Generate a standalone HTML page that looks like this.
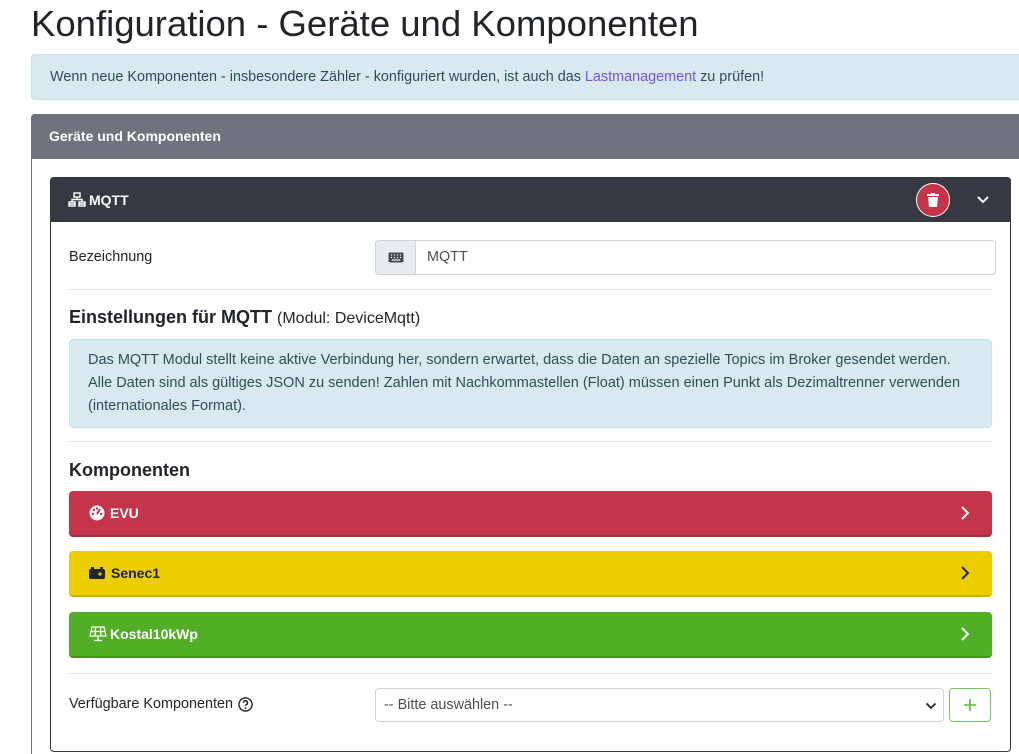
<!DOCTYPE html>
<html><head><meta charset="utf-8"><style>
*{box-sizing:border-box;margin:0;padding:0}
html,body{width:1019px;height:754px;overflow:hidden}
body{background:#fff;font-family:"Liberation Sans",sans-serif;color:#212529;font-size:14px;position:relative}
.abs{position:absolute}
h1{position:absolute;left:31px;top:3px;font-size:36.5px;font-weight:400;color:#212529;white-space:nowrap}
.info{background:#d9e9f0;border:1px solid #c6e1ea;border-radius:4px;color:#2c4f5c}
.bar{border-radius:4px;height:46px;font-weight:bold;font-size:14px;display:flex;align-items:center;padding-left:20px}
.bar .ch{position:absolute;right:22px;top:15px}
</style></head><body>
<h1>Konfiguration - Geräte und Komponenten</h1>
<div class="abs info" style="left:31px;top:54px;width:1000px;height:46px;padding:14px 18px;font-size:14.4px;white-space:nowrap">Wenn neue Komponenten - insbesondere Zähler - konfiguriert wurden, ist auch das <span style="color:#7952e3">Lastmanagement</span> zu prüfen!</div>
<div class="abs" style="left:31px;top:114px;width:1000px;height:640px;border:1px solid #6c757d;border-bottom:none;border-radius:4px 4px 0 0"></div>
<div class="abs" style="left:31px;top:114px;width:1000px;height:45px;background:#6f737d;border-radius:4px 4px 0 0;color:#fff;font-weight:bold;font-size:14px;padding:14px 18px">Geräte und Komponenten</div>
<div class="abs" style="left:50px;top:177px;width:961px;height:575px;border:1px solid #343a40;border-radius:4px"></div>
<div class="abs" style="left:50px;top:177px;width:961px;height:45px;background:#363941;border-radius:4px 4px 0 0;color:#fff;font-weight:bold;padding:14px 18px;display:flex;align-items:center;gap:3px">
<svg width="18" height="16" viewBox="0 0 18 16" fill="none" stroke="#fff" stroke-width="1.4"><rect x="6" y="1" width="6" height="4"/><rect x="1" y="10" width="6" height="4"/><rect x="11" y="10" width="6" height="4"/><path d="M9 5v2.5M4 10V7.5h10V10M1 12h6M11 12h6"/></svg>MQTT</div>
<div class="abs" style="left:916px;top:183px;width:34px;height:34px;border-radius:50%;background:#c4344a;border:1.5px solid #fff"><svg class="abs" style="left:10px;top:9px" width="12" height="14" viewBox="0 0 12 14" fill="#fff"><rect x="0" y="1" width="12" height="2"/><rect x="4" y="0" width="4" height="2"/><path d="M1 4h10l-1 10H2z"/></svg></div>
<svg class="abs" style="left:976px;top:195px" width="14" height="10" viewBox="0 0 14 10"><path d="M2 2l5 5 5-5" stroke="#fff" stroke-width="2" fill="none"/></svg>
<div class="abs" style="left:69px;top:249px;font-size:14.4px">Bezeichnung</div>
<div class="abs" style="left:375px;top:240px;width:621px;height:35px;border:1px solid #ced4da;border-radius:4px"></div>
<div class="abs" style="left:375px;top:240px;width:41px;height:35px;background:#e9ecef;border:1px solid #ced4da;border-radius:4px 0 0 4px"><svg class="abs" style="left:12px;top:11px" width="16" height="11" viewBox="0 0 16 11"><rect x="0.5" y="0.5" width="15" height="10" rx="1.5" fill="#495057"/><path d="M3 3h1M6 3h1M9 3h1M12 3h1M3 5.5h1M6 5.5h1M9 5.5h1M12 5.5h1M4 8h8" stroke="#e9ecef" stroke-width="1.2"/></svg></div>
<div class="abs" style="left:427px;top:249px;color:#495057;font-size:14.4px">MQTT</div>
<div class="abs" style="left:69px;top:289px;width:923px;border-top:1px solid #e5e5e5"></div>
<div class="abs" style="left:69px;top:307px;font-size:18px;white-space:nowrap"><b>Einstellungen für MQTT</b> <span style="font-size:16px">(Modul: DeviceMqtt)</span></div>
<div class="abs info" style="left:69px;top:339px;width:923px;height:89px;padding:9px 18px;line-height:23px;font-size:14.5px;white-space:nowrap">Das MQTT Modul stellt keine aktive Verbindung her, sondern erwartet, dass die Daten an spezielle Topics im Broker gesendet werden.<br>Alle Daten sind als gültiges JSON zu senden! Zahlen mit Nachkommastellen (Float) müssen einen Punkt als Dezimaltrenner verwenden<br>(internationales Format).</div>
<div class="abs" style="left:69px;top:441px;width:923px;border-top:1px solid #e5e5e5"></div>
<div class="abs" style="left:69px;top:460px;font-size:18px;font-weight:bold">Komponenten</div>
<div class="abs bar" style="left:69px;top:491px;width:923px;background:#c4354a;color:#fff;border-bottom:2px solid #a82c3e"><svg width="16" height="16" viewBox="0 0 16 16" style="margin-right:5px"><circle cx="8" cy="8" r="7.5" fill="#fff"/><path d="M8 9L11 4" stroke="#c4354a" stroke-width="2"/><circle cx="4" cy="9" r="1.2" fill="#c4354a"/><circle cx="5" cy="5" r="1.2" fill="#c4354a"/><circle cx="8" cy="3.5" r="1.2" fill="#c4354a"/><circle cx="12" cy="9" r="1.2" fill="#c4354a"/></svg>EVU<svg class="ch" width="10" height="14" viewBox="0 0 10 14"><path d="M2 1l6 6-6 6" stroke="#fff" stroke-width="2" fill="none"/></svg></div>
<div class="abs bar" style="left:69px;top:551px;width:923px;background:#eccd00;color:#212529;border-bottom:2px solid #cfb300"><svg width="16" height="12" viewBox="0 0 16 12" style="margin-right:6px"><rect x="0" y="2" width="16" height="10" rx="2" fill="#212529"/><rect x="2" y="0" width="3" height="3" fill="#212529"/><rect x="11" y="0" width="3" height="3" fill="#212529"/><path d="M9 7h4M11 5v4" stroke="#eccd00" stroke-width="1.2"/></svg>Senec1<svg class="ch" width="10" height="14" viewBox="0 0 10 14"><path d="M2 1l6 6-6 6" stroke="#212529" stroke-width="2" fill="none"/></svg></div>
<div class="abs bar" style="left:69px;top:612px;width:923px;background:#52ae25;color:#fff;border-bottom:2px solid #45951e"><svg width="18" height="16" viewBox="0 0 18 16" style="margin-right:3px" fill="none" stroke="#fff" stroke-width="1.3"><path d="M3 1h12l2 9H1z M2 5.5h14M6.5 1l-.5 9M11.5 1l.5 9M9 10v4M5 14.5h8"/></svg>Kostal10kWp<svg class="ch" width="10" height="14" viewBox="0 0 10 14"><path d="M2 1l6 6-6 6" stroke="#fff" stroke-width="2" fill="none"/></svg></div>
<div class="abs" style="left:69px;top:673px;width:923px;border-top:1px solid #e5e5e5"></div>
<div class="abs" style="left:69px;top:696px;display:flex;align-items:center;gap:5px;font-size:14.4px">Verfügbare Komponenten <svg width="15" height="15" viewBox="0 0 16 16"><circle cx="8" cy="8" r="7" stroke="#212529" stroke-width="1.5" fill="none"/><path d="M5.8 6.2a2.2 2.2 0 1 1 3 2c-.6.3-.8.6-.8 1.3" stroke="#212529" stroke-width="1.5" fill="none"/><circle cx="8" cy="11.8" r=".9" fill="#212529"/></svg></div>
<div class="abs" style="left:375px;top:688px;width:569px;height:34px;border:1px solid #ced4da;border-radius:4px;padding:8px 8px;color:#495057;font-size:14.4px">-- Bitte auswählen --<svg class="abs" style="right:6px;top:13px" width="12" height="8" viewBox="0 0 12 8"><path d="M1.5 1.5l4.5 4.5 4.5-4.5" stroke="#343a40" stroke-width="2" fill="none"/></svg></div>
<div class="abs" style="left:949px;top:688px;width:42px;height:34px;border:1px solid #7cc55a;border-radius:4px"><svg class="abs" style="left:13px;top:9px" width="14" height="14" viewBox="0 0 14 14"><path d="M7 1v12M1 7h12" stroke="#5cb83a" stroke-width="1.6"/></svg></div>
</body></html>
